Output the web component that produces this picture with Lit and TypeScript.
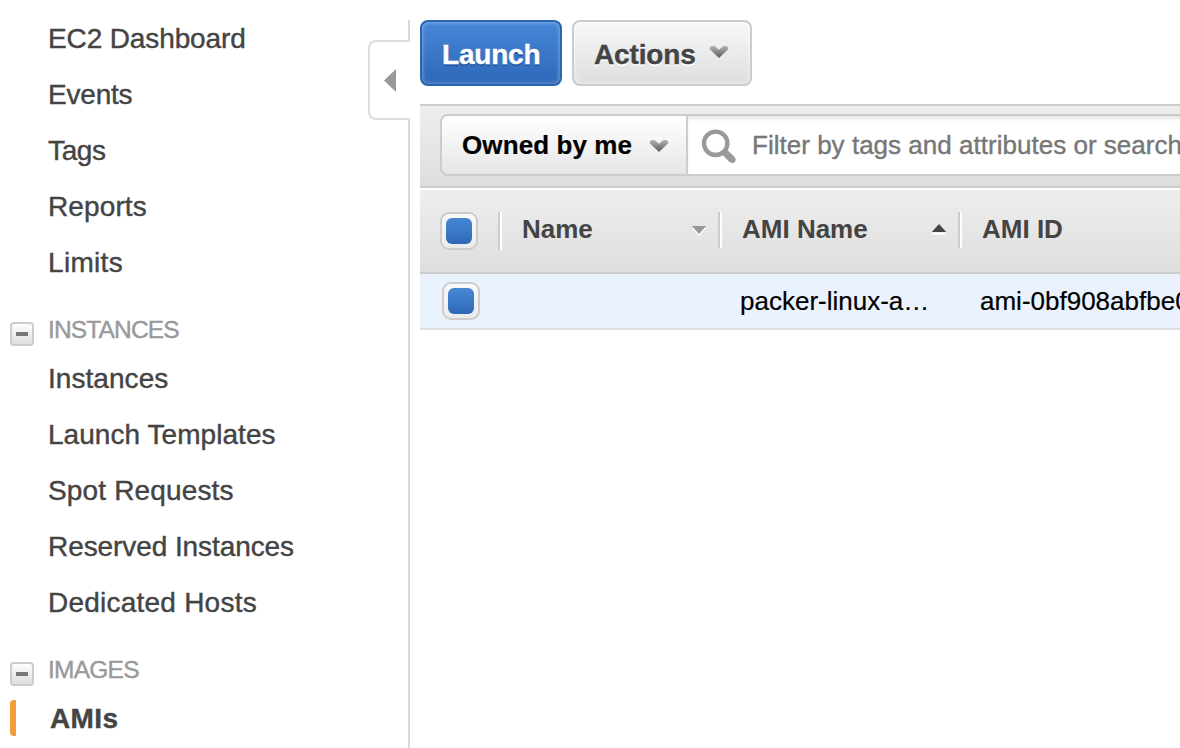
import { LitElement, html, svg, css } from "lit";
import { customElement } from "lit/decorators.js";
import { styleMap } from "lit/directives/style-map.js";

interface NavItem {
  label: string;
  spacing?: number;
  active?: boolean;
}

interface NavGroup {
  title?: string;
  spacing?: number;
  items: NavItem[];
}

const NAV: NavGroup[] = [
  {
    items: [
      { label: "EC2 Dashboard", spacing: -0.12 },
      { label: "Events", spacing: -0.2 },
      { label: "Tags", spacing: -0.35 },
      { label: "Reports", spacing: 0.12 },
      { label: "Limits", spacing: 0.32 },
    ],
  },
  {
    title: "INSTANCES",
    spacing: -0.85,
    items: [
      { label: "Instances", spacing: 0.05 },
      { label: "Launch Templates", spacing: 0.05 },
      { label: "Spot Requests", spacing: 0.15 },
      { label: "Reserved Instances", spacing: -0.08 },
      { label: "Dedicated Hosts", spacing: 0.23 },
    ],
  },
  { title: "IMAGES", spacing: -0.75, items: [{ label: "AMIs", spacing: 0.4, active: true }] },
];

const spaced = (px = 0) => styleMap({ letterSpacing: `${px}px` });

const chevron = html`<svg class="chevron" width="20" height="14" viewBox="0 0 20 14">
  <defs>
    <linearGradient id="chev" x1="0" y1="0" x2="0" y2="1">
      <stop offset="0" stop-color="#b4b4b4" />
      <stop offset="1" stop-color="#5c5c5c" />
    </linearGradient>
  </defs>
  <path d="M.8 2.6 2.4 1h3.2L10 4.8 14.4 1h3.2L19.2 2.6v1.6L10 13 .8 4.2Z" fill="url(#chev)" />
</svg>`;

const sortArrow = (up: boolean) => html`<svg class="sort" width="16" height="12" viewBox="0 0 16 12">
  ${up
    ? svg`<path d="M1 9.6h14" stroke="#fff" stroke-width="2"/><path d="M8 0 15.2 8H.8Z" fill="#444"/>`
    : svg`<path d="M8 12 .8 4h14.4Z" fill="#fff"/><path d="M8 10 .8 2h14.4Z" fill="#999"/>`}
</svg>`;

@customElement("side-nav")
class SideNav extends LitElement {
  static styles = css`
    :host {
      display: block;
      width: 368px;
      padding-top: 10px;
      box-sizing: border-box;
      color: #444;
      -webkit-text-stroke: 0.4px;
    }
    .row {
      display: grid;
      grid-template-columns: 38px 1fr;
      padding-left: 10px;
      white-space: nowrap;
    }
    .item {
      height: 56px;
      line-height: 58px;
      font-size: 28px;
    }
    .active {
      font-weight: 700;
      grid-template-columns: 40px 1fr;
    }
    .marker {
      width: 6px;
      height: 36px;
      margin-top: 10px;
      border-radius: 4px 0 0 4px;
      background: #f29d38;
    }
    .head {
      height: 60px;
      line-height: 80px;
      font-size: 24.5px;
      color: #999;
    }
    .fold {
      box-sizing: border-box;
      width: 24px;
      height: 24px;
      margin-top: 32px;
      border: 2px solid #ccc;
      border-radius: 4px;
      background: linear-gradient(#fdfdfd, #dedede);
      display: grid;
      place-items: center;
    }
    .minus {
      width: 12px;
      height: 4px;
      background: #777;
    }
  `;

  render() {
    return NAV.map(
      (g) => html`
        ${g.title
          ? html`<div class="row head">
              <span class="fold"><span class="minus"></span></span>
              <span style=${spaced(g.spacing)}>${g.title}</span>
            </div>`
          : ""}
        ${g.items.map(
          (i) => html`<div class="row item ${i.active ? "active" : ""}">
            <span class=${i.active ? "marker" : ""}></span>
            <span style=${spaced(i.spacing)}>${i.label}</span>
          </div>`
        )}
      `
    );
  }
}

@customElement("panel-divider")
class PanelDivider extends LitElement {
  static styles = css`
    :host {
      display: flex;
      flex-direction: column;
      align-items: flex-end;
      box-sizing: border-box;
      width: 42px;
      padding-top: 20px;
    }
    .top,
    .bottom {
      width: 2px;
      background: #d9d9d9;
    }
    .top {
      height: 20px;
    }
    .bottom {
      flex: 1;
    }
    .tab {
      box-sizing: border-box;
      width: 42px;
      height: 80px;
      border: 2px solid #ddd;
      border-right: 0;
      border-radius: 8px 0 0 8px;
      display: flex;
      align-items: center;
      padding-left: 13px;
    }
  `;

  render() {
    return html`<div class="top"></div>
      <div class="tab">
        <svg width="14" height="24" viewBox="0 0 14 24">
          <path d="M1 12.5 13 1v23Z" fill="#999" />
        </svg>
      </div>
      <div class="bottom"></div>`;
  }
}

@customElement("check-box")
class CheckBox extends LitElement {
  static styles = css`
    :host {
      display: grid;
      place-items: center;
      box-sizing: border-box;
      width: 38px;
      height: 38px;
      border: 2px solid #ccc;
      border-radius: 9px;
      background: linear-gradient(#f9f9f9, #ebebeb);
    }
    .fill {
      width: 26px;
      height: 26px;
      border-radius: 6px;
      background: linear-gradient(#4787d6, #2e68b5);
    }
  `;

  render() {
    return html`<div class="fill"></div>`;
  }
}

@customElement("app-root")
class AppRoot extends LitElement {
  static styles = css`
    :host {
      display: grid;
      grid-template-columns: 368px 42px 1fr;
      width: 1180px;
      height: 748px;
      overflow: hidden;
      background: #fff;
      font-family: "Liberation Sans", Arial, sans-serif;
    }
    .main {
      min-width: 0;
      padding: 20px 0 0 10px;
      overflow: hidden;
    }
    .buttons {
      display: flex;
      gap: 10px;
      height: 66px;
      margin-bottom: 18px;
    }
    .btn {
      display: flex;
      align-items: center;
      box-sizing: border-box;
      height: 66px;
      padding: 3px 20px 0;
      border: 2px solid;
      border-radius: 8px;
      font-size: 28px;
      font-weight: 700;
      line-height: 59px;
      white-space: nowrap;
      -webkit-text-stroke: 0.4px;
    }
    .primary {
      width: 142px;
      border-color: #2b65b3;
      color: #fff;
      background: linear-gradient(#4787d8, #2e68b7);
      box-shadow: inset 0 0 4px rgba(255, 255, 255, 0.45);
      text-shadow: 0 2px 0 #2456a0;
    }
    .secondary {
      width: 180px;
      border-color: #ccc;
      color: #444;
      background: linear-gradient(#f8f8f8, #dedede);
      box-shadow: inset 0 0 4px rgba(255, 255, 255, 0.8);
      text-shadow: 0 2px 0 #fff;
    }
    .secondary .chevron {
      margin: 0 0 5px 13px;
    }
    .chevron {
      flex: none;
    }
    .filters {
      box-sizing: border-box;
      height: 84px;
      padding: 8px 0 0 20px;
      border: solid #ccc;
      border-width: 2px 0;
      background: linear-gradient(#eee, #dedede);
    }
    .group {
      display: flex;
      box-sizing: border-box;
      width: 800px;
      height: 62px;
      border: 2px solid #ccc;
      border-radius: 8px;
      overflow: hidden;
      font-size: 26px;
      line-height: 58px;
      white-space: nowrap;
    }
    .owner {
      display: flex;
      flex: none;
      align-items: center;
      box-sizing: border-box;
      width: 246px;
      padding-left: 20px;
      border-right: 2px solid #ccc;
      background: linear-gradient(#fff, #e6e6e6);
      font-weight: 700;
      color: #000;
      -webkit-text-stroke: 0.2px;
    }
    .owner .chevron {
      margin-left: 17px;
      margin-top: 2px;
    }
    .search {
      flex: 1;
      display: flex;
      align-items: center;
      gap: 12px;
      padding-left: 12px;
      background: #fff;
      box-shadow: inset 0 4px 5px -2px rgba(0, 0, 0, 0.12);
      color: #777;
      -webkit-text-stroke: 0.4px;
    }
    .head {
      display: flex;
      box-sizing: border-box;
      height: 86px;
      padding: 22px 0 0 20px;
      border-top: 2px solid #fff;
      border-bottom: 2px solid #ccc;
      background: linear-gradient(#eee, #dedede);
      font-size: 26px;
      font-weight: 700;
      line-height: 34px;
      color: #444;
      white-space: nowrap;
    }
    .first {
      width: 58px;
      flex: none;
    }
    .col {
      display: flex;
      box-sizing: border-box;
      flex: none;
      width: 240px;
      height: 36px;
      padding: 0 11px 0 22px;
      border-left: 2px solid #ccc;
      box-shadow: inset 2px 0 0 #fff;
      justify-content: space-between;
    }
    .name {
      width: 220px;
      height: 38px;
    }
    .sort {
      margin-top: 12px;
    }
    .line {
      display: grid;
      grid-template-columns: 78px 220px 240px 300px;
      box-sizing: border-box;
      height: 56px;
      padding-left: 22px;
      border-bottom: 2px solid #dddfe1;
      background: #eaf3fd;
      font-size: 26px;
      line-height: 54px;
      color: #000;
      white-space: nowrap;
      -webkit-text-stroke: 0.2px;
    }
    .line check-box {
      margin-top: 8px;
    }
  `;

  render() {
    return html`
      <side-nav></side-nav>
      <panel-divider></panel-divider>
      <div class="main">
        <div class="buttons">
          <div class="btn primary"><span style=${spaced(-0.2)}>Launch</span></div>
          <div class="btn secondary"><span style=${spaced(-0.15)}>Actions</span>${chevron}</div>
        </div>
        <div class="filters">
          <div class="group">
            <div class="owner"><span style=${spaced(0.1)}>Owned by me</span>${chevron}</div>
            <div class="search">
              <svg width="40" height="40" viewBox="0 0 40 40">
                <circle cx="15.7" cy="18.3" r="11.7" fill="none" stroke="#999" stroke-width="4.4" />
                <path d="M24 26.6 32.6 35" stroke="#999" stroke-width="7" />
                <path d="M30 32.4 32.4 34.8" stroke="#999" stroke-width="6.4" stroke-linecap="round" />
              </svg>
              <span style=${spaced(0.02)}>Filter by tags and attributes or search</span>
            </div>
          </div>
        </div>
        <div class="head">
          <div class="first"><check-box></check-box></div>
          <div class="col name"><span>Name</span>${sortArrow(false)}</div>
          <div class="col"><span>AMI Name</span>${sortArrow(true)}</div>
          <div class="col"><span>AMI ID</span></div>
        </div>
        <div class="line">
          <check-box></check-box>
          <span></span>
          <span>packer-linux-a…</span>
          <span>ami-0bf908abfbe0</span>
        </div>
      </div>
    `;
  }
}
